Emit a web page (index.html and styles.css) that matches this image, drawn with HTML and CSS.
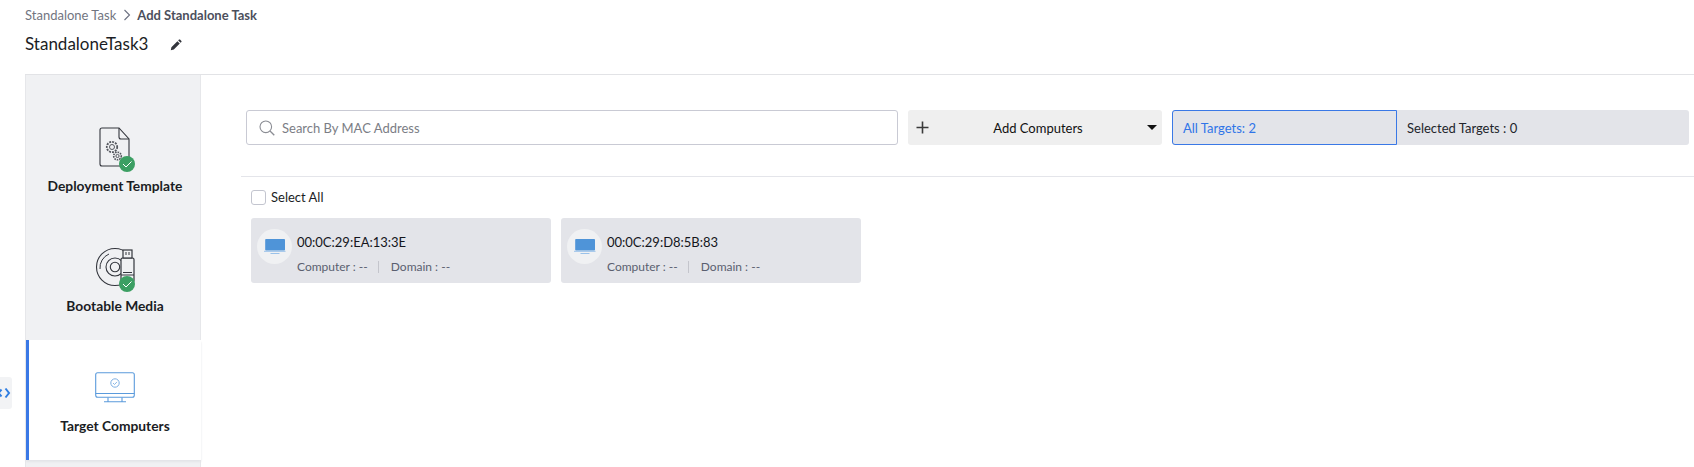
FILE: index.html
```html
<!DOCTYPE html>
<html lang="en">
<head>
<meta charset="utf-8">
<title>Add Standalone Task</title>
<link rel="stylesheet" href="styles.css">
</head>
<body>
<div class="page">
  <nav class="crumbs"><span class="crumb">Standalone Task</span>
    <svg class="crumb-sep" viewBox="0 0 8 12" width="8" height="12"><path d="M1.500 1l5 5-5 5" fill="none" stroke="#6b7080" stroke-width="1.100"/></svg>
    <b class="crumb-now">Add Standalone Task</b></nav>
  <div class="title-row">
    <h1 class="title">StandaloneTask3</h1>
    <svg class="pencil" viewBox="0 0 12 12" width="12" height="12"><path d="M0.800 11.200l0.600-3 6-6 2.400 2.400-6 6z M8.200 1.400l0.800-0.800q0.500-.4 1 0l1.400 1.400q.4.500 0 1l-.8.800z" fill="#33353c"/></svg>
  </div>
  <div class="body">
    <aside class="side">
      <div class="step">
        <svg class="step-icon" viewBox="0 0 44 46" width="44" height="46">
          <path d="M9 1h17l10 11v27h-27q-2 0-2-2v-34q0-2 2-2z" fill="none" stroke="#33363d" stroke-width="1.100"/>
          <path d="M26 1v9q0 2 2 2h8" fill="none" stroke="#33363d" stroke-width="1.100"/>
          <circle cx="19" cy="20" r="5.200" fill="none" stroke="#55585f" stroke-width="1.800" stroke-dasharray="2 1"/><circle cx="19" cy="20" r="2.500" fill="none" stroke="#55585f"/>
          <circle cx="24.500" cy="29" r="3.800" fill="none" stroke="#55585f" stroke-width="1.600" stroke-dasharray="1.600 .9"/><circle cx="24.500" cy="29" r="1.600" fill="none" stroke="#55585f"/>
          <circle cx="34" cy="37" r="8" fill="#3c9f63"/><path d="M30 37l3 3 5.500-5.500" fill="none" stroke="#fff" stroke-width="1"/>
        </svg>
        <div class="step-name">Deployment Template</div>
      </div>
      <div class="step">
        <svg class="step-icon" viewBox="0 0 44 46" width="44" height="46">
          <circle cx="22" cy="20" r="18.500" fill="none" stroke="#33363d" stroke-width="1.100"/>
          <path d="M7 22a15 15 0 0 1 9-15" fill="none" stroke="#33363d" stroke-width="1"/>
          <circle cx="22" cy="20" r="9" fill="none" stroke="#33363d" stroke-width="1.100"/><circle cx="22" cy="20" r="4.700" fill="none" stroke="#33363d" stroke-width="1.100"/>
          <rect x="28" y="11" width="13" height="24" rx="1.500" fill="#f0f1f3" stroke="#33363d" stroke-width="1.200"/>
          <rect x="30" y="3" width="9" height="8" fill="#f0f1f3" stroke="#33363d" stroke-width="1.200"/>
          <path d="M33 5v3M36 5v3M28 28h13M30 25.500h9" stroke="#33363d" fill="none"/>
          <circle cx="34" cy="37" r="8" fill="#3c9f63"/><path d="M30 37l3 3 5.500-5.500" fill="none" stroke="#fff" stroke-width="1"/>
        </svg>
        <div class="step-name">Bootable Media</div>
      </div>
      <div class="step step-active">
        <svg class="step-icon step-icon-target" viewBox="0 0 40 31" width="40" height="31">
          <rect x="0.700" y="0.700" width="38.600" height="24.600" rx="2" fill="none" stroke="#5b9bdc" stroke-width="1.100"/>
          <path d="M0.700 21.500h38.600M9 29.800h22M13 25.500v4M27 25.500v4" fill="none" stroke="#5b9bdc" stroke-width="1.100"/>
          <circle cx="20" cy="11" r="4.200" fill="none" stroke="#7fb0e3"/><path d="M18 11l1.500 1.500 2.500-2.600" fill="none" stroke="#7fb0e3" stroke-width=".9"/>
        </svg>
        <div class="step-name">Target Computers</div>
      </div>
    </aside>
    <main class="main">
      <div class="toolbar">
        <div class="search">
          <svg class="search-icon" viewBox="0 0 16 16" width="16" height="16"><circle cx="6.800" cy="6.800" r="5.800" fill="none" stroke="#8b8d94" stroke-width="1.100"/><path d="M11 11l4.300 4.300" stroke="#8b8d94" stroke-width="1.300"/></svg>
          <span class="search-text">Search By MAC Address</span>
        </div>
        <div class="add">
          <svg class="plus" viewBox="0 0 13 13" width="13" height="13"><path d="M6.500 0.500v12M0.500 6.500h12" stroke="#3a3a3a" stroke-width="1.600"/></svg>
          <span class="add-text">Add Computers</span>
          <span class="caret"></span>
        </div>
        <div class="tabs">
          <div class="tab tab-on">All Targets: 2</div>
          <div class="tab">Selected Targets : 0</div>
        </div>
      </div>
      <div class="list">
        <label class="select-all"><span class="check"></span>Select All</label>
        <div class="cards">
          <div class="card">
            <span class="avatar"><svg viewBox="0 0 22 15" width="22" height="15"><rect x="1.200" y="0" width="19.800" height="11.500" rx="0.800" fill="#4f94d8"/><path d="M0 12.300h21.500M6.500 14.500h9" stroke="#8fbbe8" stroke-width="0.900"/></svg></span>
            <div class="card-info">
              <div class="mac">00:0C:29:EA:13:3E</div>
              <div class="meta"><span>Computer : --</span><i class="bar"></i><span>Domain : --</span></div>
            </div>
          </div>
          <div class="card">
            <span class="avatar"><svg viewBox="0 0 22 15" width="22" height="15"><rect x="1.200" y="0" width="19.800" height="11.500" rx="0.800" fill="#4f94d8"/><path d="M0 12.300h21.500M6.500 14.500h9" stroke="#8fbbe8" stroke-width="0.900"/></svg></span>
            <div class="card-info">
              <div class="mac">00:0C:29:D8:5B:83</div>
              <div class="meta"><span>Computer : --</span><i class="bar"></i><span>Domain : --</span></div>
            </div>
          </div>
        </div>
      </div>
    </main>
  </div>
  <div class="collapse"><svg viewBox="0 0 12 14" width="12" height="14"><path d="M5.500 2.500l3.500 4.500-3.500 4.500" fill="none" stroke="#2f7de1" stroke-width="2"/><path d="M1.500 3.500l-3 3.500 3 3.500" fill="none" stroke="#2f7de1" stroke-width="2"/></svg></div>
</div>
</body>
</html>
```
FILE: styles.css
```css
* { box-sizing: border-box; }
html, body { margin: 0; height: 100%; background: #fff; overflow: hidden; }
body { font-family: Lato, "Noto Sans", sans-serif; color: #1b1d24; }
.page { position: relative; height: 467px; width: 1694px; overflow: hidden; padding-top: 6px; }
.crumbs { display: flex; align-items: center; height: 18px; padding-left: 25px; font-size: 13px; }
.crumb { color: #72757f; }
.crumb-sep { margin: 0 6px 0 7px; }
.crumb-now { color: #4c4f5c; font-weight: 700; }
.title-row { display: flex; align-items: center; height: 26px; margin-top: 6px; padding-left: 25px; }
.title { margin: 0; font-size: 17px; font-weight: 400; color: #1b1d24; }
.pencil { margin-left: 22px; margin-top: 3px; }
.body { display: flex; margin-top: 18px; margin-left: 25px; height: 393px; border-top: 1px solid #e2e3e6; }
.side { width: 176px; flex: none; padding-top: 25px; background: #f0f1f3; border-left: 1px solid #e6e7ea; border-right: 1px solid #e6e7ea; }
.step { width: 175px; height: 120px; display: flex; flex-direction: column; align-items: center; padding-top: 27px; border-left: 3px solid transparent; }
.step-icon { display: block; height: 46px; }
.step-icon-target { height: 31px; margin: 5px 0 10px; }
.step-name { margin-top: 4px; font-size: 13.800px; font-weight: 700; color: #1b1d24; line-height: 18px; white-space: nowrap; }
.step-active { background: #fff; border-left-color: #3a78e6; box-shadow: 0 2px 2px #e4e5e8; }
.main { flex: 1; min-width: 0; }
.toolbar { display: flex; align-items: stretch; height: 35px; margin: 35px 5px 0 45px; }
.search { display: flex; align-items: center; width: 652px; border: 1px solid #c9cad4; border-radius: 3px; padding-left: 12px; }
.search-text { margin-left: 7px; font-size: 13px; color: #7b7d85; }
.add { display: flex; align-items: center; width: 254px; margin-left: 10px; padding: 0 5px 0 8px; background: #efefef; border-radius: 3px; font-size: 13px; color: #111; }
.add-text { flex: 1; text-align: center; }
.caret { width: 0; height: 0; border-left: 5px solid transparent; border-right: 5px solid transparent; border-top: 5px solid #111; }
.tabs { display: flex; flex: 1; margin-left: 10px; background: #e3e4e9; border-radius: 3px; font-size: 13px; }
.tab { display: flex; align-items: center; padding-left: 10px; color: #22242b; }
.tab-on { width: 225px; color: #2f74e8; border: 1px solid #3a78e6; border-radius: 3px 0 0 3px; }
.list { margin: 31px 0 0 40px; padding: 12px 0 0 10px; border-top: 1px solid #e4e5ea; }
.select-all { display: flex; align-items: center; height: 16px; font-size: 13px; color: #1b1d24; }
.check { width: 15px; height: 15px; margin-right: 5px; border: 1px solid #c3c5cf; border-radius: 3px; background: #fff; }
.cards { display: flex; gap: 10px; margin-top: 13px; }
.card { display: flex; width: 300px; height: 65px; padding: 11px 0 0 6px; background: #e3e4e9; border-radius: 3px; }
.avatar { display: flex; align-items: center; justify-content: center; width: 35px; height: 35px; background: #f0f1f3; border-radius: 50%; }
.card-info { margin-left: 5px; }
.mac { font-size: 13px; line-height: 18px; margin-top: 4px; color: #14161c; }
.meta { display: flex; align-items: center; margin-top: 8px; font-size: 12px; line-height: 16px; color: #5a5f70; }
.bar { width: 1px; height: 12px; margin: 0 12px 0 10px; background: #c4c5cc; }
.collapse { position: absolute; left: 0; top: 377px; display: flex; align-items: center; width: 12px; height: 32px; background: #f2f3f5; border-radius: 0 3px 3px 0; }
```
